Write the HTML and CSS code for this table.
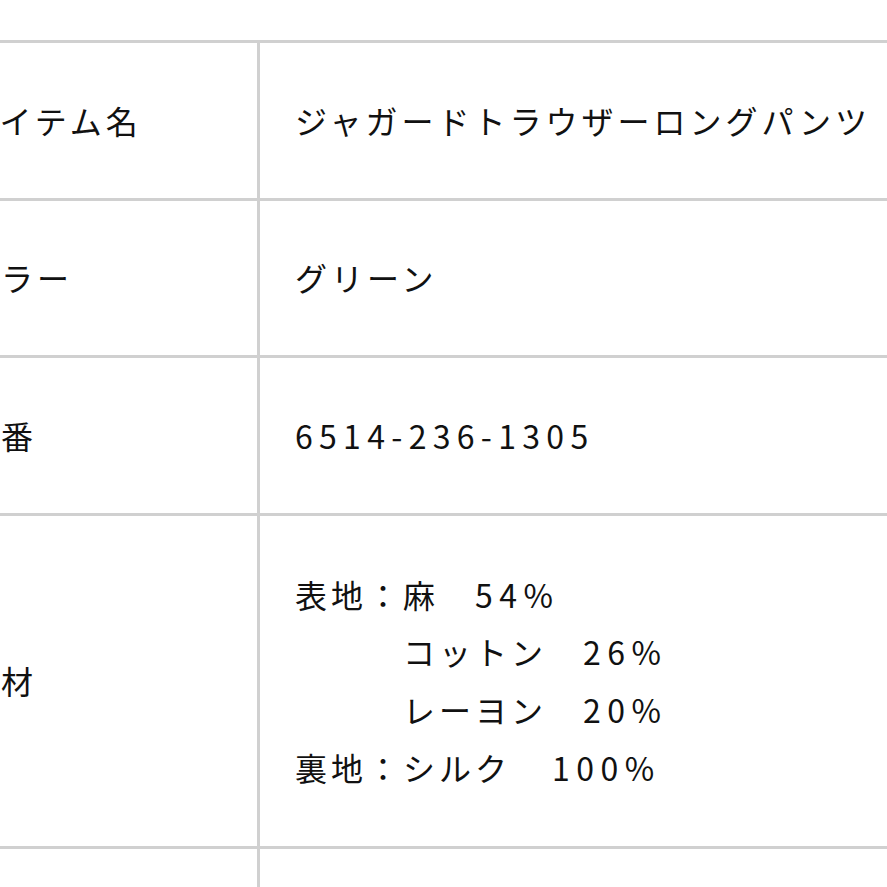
FILE: index.html
```html
<!DOCTYPE html>
<html lang="ja">
<head>
<meta charset="utf-8">
<link rel="stylesheet" href="styles.css">
</head>
<body>
<table class="spec">
  <tr>
    <th class="label">アイテム名</th>
    <td class="value">ジャガードトラウザーロングパンツ</td>
  </tr>
  <tr>
    <th class="label">カラー</th>
    <td class="value">グリーン</td>
  </tr>
  <tr>
    <th class="label">品番</th>
    <td class="value"><span class="num">6514-236-1305</span></td>
  </tr>
  <tr class="tall">
    <th class="label">素材</th>
    <td class="value">表地：麻　<span class="pct">54%</span><br>　　　コットン　<span class="pct">26%</span><br>　　　レーヨン　<span class="pct">20%</span><br>裏地：シルク　<span class="pct wide">100%</span></td>
  </tr>
  <tr class="next">
    <th class="label"></th>
    <td class="value"></td>
  </tr>
</table>
</body>
</html>
```

FILE: styles.css
```css
html, body {
  margin: 0;
  padding: 0;
  background: #ffffff;
  overflow: hidden;
}

body {
  width: 887px;
  height: 887px;
  font-family: "Noto Sans CJK JP", "Noto Sans", sans-serif;
  color: #111111;
}

.spec {
  table-layout: fixed;
  width: 1100px;
  border-spacing: 0;
  border-top: 3px solid #d0d0d0;
  margin-top: 40px;
  margin-left: -74px;
  font-size: 32px;
  line-height: 57.6px;
  letter-spacing: 4px;
}

.label,
.value {
  text-align: left;
  font-weight: normal;
  vertical-align: middle;
  padding: 48.5px 36px 48.5px 36px;
  border-bottom: 3px solid #d0d0d0;
  white-space: nowrap;
}

.label {
  width: 259px;
  padding-left: 39px;
  padding-right: 33px;
  border-right: 3px solid #d0d0d0;
}

.value {
  padding-left: 35px;
}

.num {
  letter-spacing: 6.3px;
}

.pct {
  letter-spacing: 6.5px;
}

.pct.wide {
  margin-left: 5px;
}

.tall .label,
.tall .value {
  padding-top: 50px;
  padding-bottom: 50px;
}

.next .label,
.next .value {
  height: 60px;
  border-bottom: none;
}
```
